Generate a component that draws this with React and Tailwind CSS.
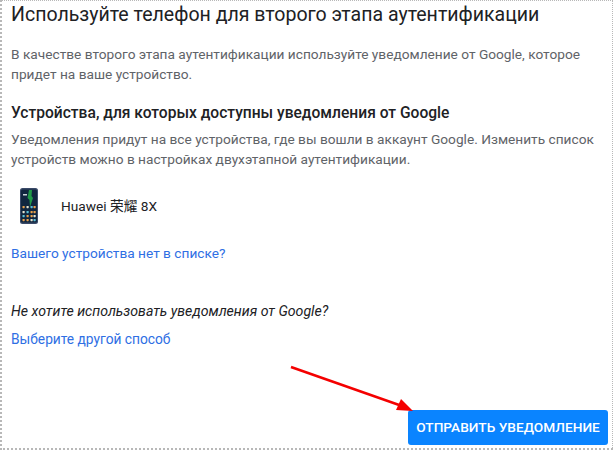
const APP_COLORS = ['#e8a04c', '#e8e4d0', '#5cc0d8', '#e8a04c'];

const PhoneIcon = () => (
  <svg width="18" height="36" viewBox="0 0 18 36" className="block">
    <rect x="0" y="0" width="18" height="36" rx="2.5" fill="#3a4a68" />
    <rect x="1" y="1.5" width="16" height="33" rx="1.5" fill="#10263f" />
    <path d="M9 2 L12 2 L11.5 8 L13 10 L10 19 L9.5 12 L7.5 10 Z" fill="#1f9a48" />
    <rect x="3" y="6" width="4" height="1.5" fill="#c9d4d8" />
    {[18, 23, 27, 31].map((y, row) =>
      [2.5, 6.5, 10.5, 13.5].map((x, col) => (
        <rect key={`${row}-${col}`} x={x} y={y} width="2.2" height="2.2" rx="0.6" fill={APP_COLORS[(row + col) % 4]} />
      ))
    )}
  </svg>
);

const App = () => {
  return (
    <div className="relative w-[613px] h-[450px] overflow-hidden bg-white text-[#202124] font-['Roboto',_'Noto_Sans_CJK_SC',_sans-serif] border-l-2 border-t border-b-2 border-r border-dotted border-[#b8b8b8]">
      <div className="flex flex-col h-full pl-[9px] pr-[10px]">
        <h1 className="text-[19.55px] leading-[28px] font-normal">Используйте телефон для второго этапа аутентификации</h1>
        <p className="mt-[15px] text-[13.7px] leading-[20px] text-[#5f6368]">
          В качестве второго этапа аутентификации используйте уведомление от Google, которое придет на ваше устройство.
        </p>
        <h2 className="mt-[19px] text-[15.6px] leading-[20px] font-medium">Устройства, для которых доступны уведомления от Google</h2>
        <p className="mt-[6px] text-[13.7px] leading-[20px] text-[#5f6368]">
          Уведомления придут на все устройства, где вы вошли в аккаунт Google. Изменить список устройств можно в настройках двухэтапной аутентификации.
        </p>
        <div className="flex items-center mt-[19px] pl-[9px]">
          <PhoneIcon />
          <span className="ml-[23px] text-[13.7px]">Huawei 荣耀 8X</span>
        </div>
        <a className="mt-[19px] text-[13.7px] leading-[20px] text-[#2f6fe4]">Вашего устройства нет в списке?</a>
        <p className="mt-[38px] text-[14.15px] leading-[20px] italic">Не хотите использовать уведомления от Google?</p>
        <a className="mt-[8px] text-[13.75px] leading-[20px] text-[#2f6fe4]">Выберите другой способ</a>
        <div className="flex justify-end mt-auto mb-[3px] mr-[-6px]">
          <button className="h-[35px] w-[200px] rounded-[3px] bg-[#0a84ff] text-white text-[13.7px] font-medium">ОТПРАВИТЬ УВЕДОМЛЕНИЕ</button>
        </div>
      </div>
      {/* red arrow overlay */}
      <svg className="absolute left-[286px] top-[362px]" width="130" height="50" viewBox="0 0 130 50">
        <line x1="3" y1="4" x2="114" y2="43" stroke="#f40000" strokeWidth="2.5" />
        <polygon points="125,48 108,47 113,36" fill="#f40000" />
      </svg>
    </div>
  );
};

export default App;
